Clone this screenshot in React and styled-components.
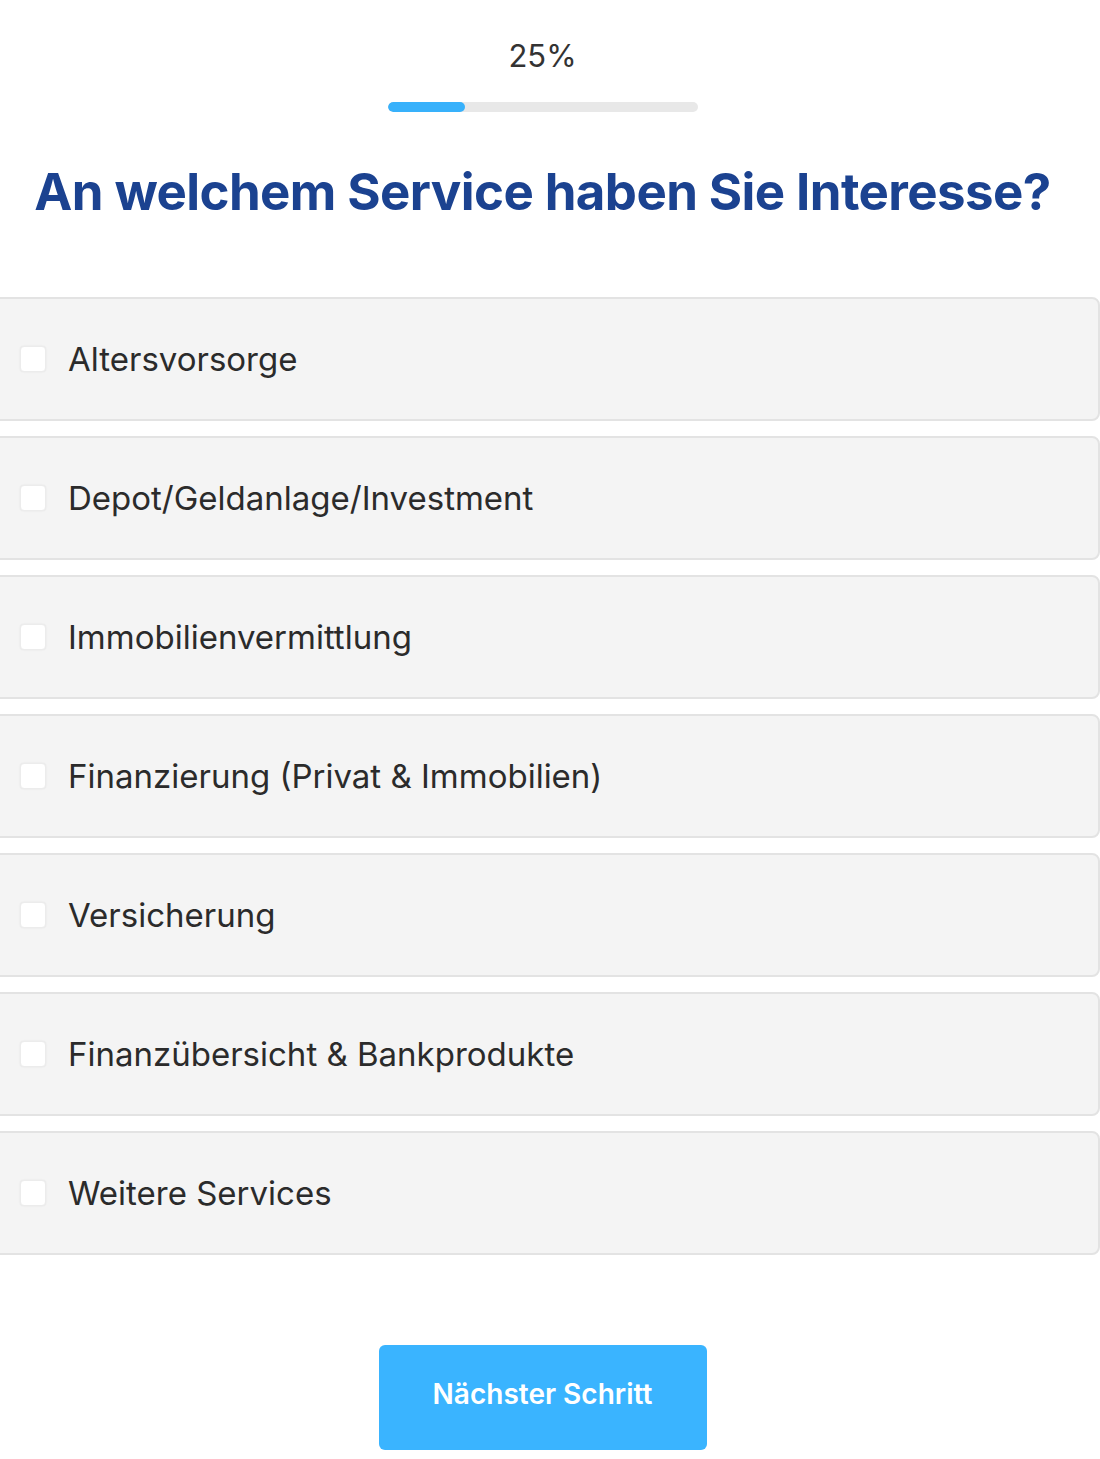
import React, { useState } from "react";
import styled, { createGlobalStyle } from "styled-components";

const GlobalStyle = createGlobalStyle`
  html, body {
    margin: 0;
    padding: 0;
    background: #ffffff;
    font-family: "Inter", "Noto Sans", "Liberation Sans", sans-serif;
    overflow-x: hidden;
  }
`;

const Page = styled.div`
  width: 1100px;
  padding-top: 36px;
`;

const Centered = styled.div`
  width: 1085px;
`;

const Percent = styled.div`
  text-align: center;
  font-size: 31px;
  line-height: 40px;
  color: #333333;
`;

const Track = styled.div`
  width: 310px;
  height: 10px;
  margin: 26px auto 0;
  background: #e8e8e8;
  border-radius: 5px;
  overflow: hidden;
`;

const Fill = styled.div`
  height: 100%;
  background: #38b1fb;
  border-radius: 5px;
`;

const Title = styled.h1`
  margin: 44px 0 0;
  text-align: center;
  font-size: 51px;
  line-height: 72px;
  font-weight: 700;
  color: #1b4290;
  letter-spacing: -0.6px;
`;

const List = styled.div`
  display: flex;
  flex-direction: column;
  gap: 15px;
  margin: 69px 0 0 -12px;
`;

const Option = styled.label`
  display: flex;
  align-items: center;
  height: 124px;
  box-sizing: border-box;
  padding-left: 30px;
  background: ${(p) => (p.$checked ? "#e9f5ff" : "#f4f4f4")};
  border: 2px solid #e3e3e3;
  border-radius: 8px;
  cursor: pointer;
`;

const Box = styled.span`
  width: 26px;
  height: 26px;
  flex-shrink: 0;
  box-sizing: border-box;
  background: ${(p) => (p.$checked ? "#38b1fb" : "#ffffff")};
  border: 1px solid #ececec;
  border-radius: 4px;
  box-shadow: 0 0 2px rgba(0, 0, 0, 0.08);
`;

const OptionText = styled.span`
  margin-left: 22px;
  font-size: 33px;
  color: #2b2b2b;
`;

const Footer = styled(Centered)`
  display: flex;
  justify-content: center;
  padding-top: 90px;
`;

const Button = styled.button`
  width: 328px;
  height: 105px;
  padding: 0 0 8px;
  border: none;
  border-radius: 6px;
  background: #3ab4ff;
  color: #ffffff;
  font-family: inherit;
  font-size: 28px;
  font-weight: 600;
  cursor: pointer;
`;

const services = [
  "Altersvorsorge",
  "Depot/Geldanlage/Investment",
  "Immobilienvermittlung",
  "Finanzierung (Privat & Immobilien)",
  "Versicherung",
  "Finanzübersicht & Bankprodukte",
  "Weitere Services",
];

export default function App() {
  const [selected, setSelected] = useState([]);
  const progress = 25;

  const toggle = (name) => {
    setSelected((prev) =>
      prev.includes(name) ? prev.filter((n) => n !== name) : [...prev, name]
    );
  };

  return (
    <>
      <GlobalStyle />
      <Page>
        <Centered>
          <Percent>{progress}%</Percent>
          <Track>
            <Fill style={{ width: `${progress}%` }} />
          </Track>
          <Title>An welchem Service haben Sie Interesse?</Title>
        </Centered>
        <List>
          {services.map((name) => {
            const checked = selected.includes(name);
            return (
              <Option key={name} $checked={checked} onClick={() => toggle(name)}>
                <Box $checked={checked} />
                <OptionText>{name}</OptionText>
              </Option>
            );
          })}
        </List>
        <Footer>
          <Button>Nächster Schritt</Button>
        </Footer>
      </Page>
    </>
  );
}
